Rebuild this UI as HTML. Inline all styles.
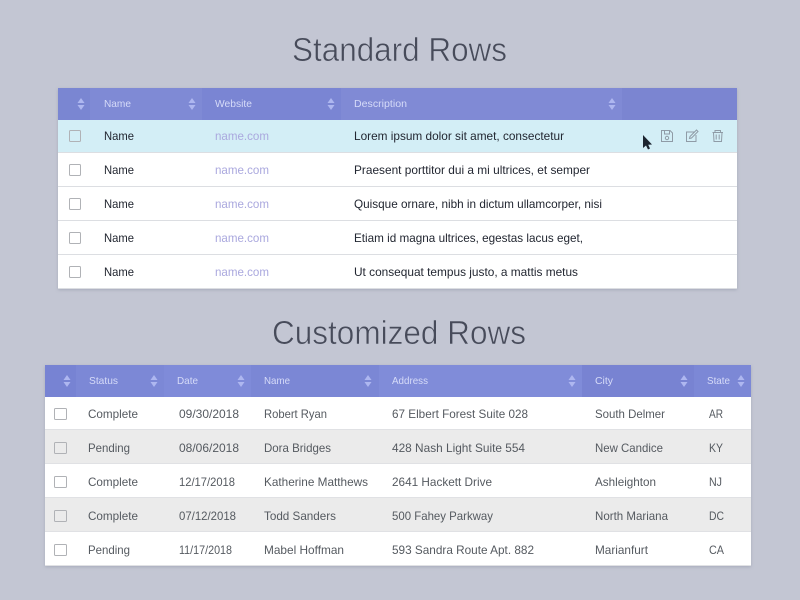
<!DOCTYPE html>
<html><head><meta charset="utf-8"><style>
html,body{margin:0;padding:0;background:#c3c6d3;width:800px;height:600px;overflow:hidden}
svg{display:block}
text{font-family:"Liberation Sans",sans-serif;font-size:12px}
.h{fill:#d6dbf8;font-size:10.5px}
.t{fill:#222730}
.l{fill:#aaa8de}
.g{fill:#555a60}
.title{font-size:33.5px;fill:#474b5a;stroke:#c3c6d3;stroke-width:.6px}
</style></head><body>
<svg width="800" height="600" viewBox="0 0 800 600" xmlns="http://www.w3.org/2000/svg">
<defs>
<filter id="s" x="-5%" y="-5%" width="110%" height="115%"><feDropShadow dx="0" dy="1" stdDeviation="1.5" flood-color="#70748a" flood-opacity=".35"/></filter>
<filter id="b"><feGaussianBlur stdDeviation="0.3"/></filter>
<g id="sort"><path d="M-.5 5L3 0L6.5 5Z" fill="#aeb7f0"/><path d="M-.5 7L3 12L6.5 7Z" fill="#aeb7f0"/></g>
</defs>
<rect width="800" height="600" fill="#c3c6d3"/>
<g filter="url(#b)">
<text class="title" x="292" y="61" textLength="215" lengthAdjust="spacingAndGlyphs">Standard Rows</text>
<text class="title" x="272" y="344" textLength="254" lengthAdjust="spacingAndGlyphs">Customized Rows</text>
</g>
<!-- Table 1 -->
<rect x="58" y="88" width="679" height="201" fill="#fff" filter="url(#s)"/>
<rect x="58" y="88" width="679" height="32" fill="#7a86d2"/>
<rect x="90" y="88" width="112" height="32" fill="#7f8ad5"/>
<rect x="202" y="88" width="139" height="32" fill="#7a85d3"/>
<rect x="341" y="88" width="281" height="32" fill="#808ad5"/>
<rect x="622" y="88" width="115" height="32" fill="#7b85d1"/>
<rect x="58" y="120" width="679" height="32" fill="#d3eef6"/>
<g fill="#dcdee2"><rect x="58" y="152" width="679" height="1"/><rect x="58" y="186" width="679" height="1"/><rect x="58" y="220" width="679" height="1"/><rect x="58" y="254" width="679" height="1"/><rect x="58" y="288" width="679" height="1"/></g>
<use href="#sort" x="78" y="98"/><use href="#sort" x="189" y="98"/><use href="#sort" x="328" y="98"/><use href="#sort" x="609" y="98"/>
<g fill="#fff" stroke="#b0b2b6" stroke-width="1"><rect x="69.5" y="130.5" width="11" height="11" rx="1" fill="#d3eef6"/><rect x="69.5" y="164.5" width="11" height="11" rx="1"/><rect x="69.5" y="198.5" width="11" height="11" rx="1"/><rect x="69.5" y="232.5" width="11" height="11" rx="1"/><rect x="69.5" y="266.5" width="11" height="11" rx="1"/></g>
<g filter="url(#b)">
<text class="h" x="104" y="107" textLength="27" lengthAdjust="spacingAndGlyphs">Name</text><text class="h" x="215" y="107" textLength="37" lengthAdjust="spacingAndGlyphs">Website</text><text class="h" x="354" y="107" textLength="53" lengthAdjust="spacingAndGlyphs">Description</text>
<text class="t" x="104" y="140" textLength="30" lengthAdjust="spacingAndGlyphs">Name</text><text class="l" x="215" y="140" textLength="54" lengthAdjust="spacingAndGlyphs">name.com</text><text class="t" x="354" y="140" textLength="210" lengthAdjust="spacingAndGlyphs">Lorem ipsum dolor sit amet, consectetur</text>
<text class="t" x="104" y="174" textLength="30" lengthAdjust="spacingAndGlyphs">Name</text><text class="l" x="215" y="174" textLength="54" lengthAdjust="spacingAndGlyphs">name.com</text><text class="t" x="354" y="174" textLength="236" lengthAdjust="spacingAndGlyphs">Praesent porttitor dui a mi ultrices, et semper</text>
<text class="t" x="104" y="208" textLength="30" lengthAdjust="spacingAndGlyphs">Name</text><text class="l" x="215" y="208" textLength="54" lengthAdjust="spacingAndGlyphs">name.com</text><text class="t" x="354" y="208" textLength="248" lengthAdjust="spacingAndGlyphs">Quisque ornare, nibh in dictum ullamcorper, nisi</text>
<text class="t" x="104" y="242" textLength="30" lengthAdjust="spacingAndGlyphs">Name</text><text class="l" x="215" y="242" textLength="54" lengthAdjust="spacingAndGlyphs">name.com</text><text class="t" x="354" y="242" textLength="229" lengthAdjust="spacingAndGlyphs">Etiam id magna ultrices, egestas lacus eget,</text>
<text class="t" x="104" y="276" textLength="30" lengthAdjust="spacingAndGlyphs">Name</text><text class="l" x="215" y="276" textLength="54" lengthAdjust="spacingAndGlyphs">name.com</text><text class="t" x="354" y="276" textLength="224" lengthAdjust="spacingAndGlyphs">Ut consequat tempus justo, a mattis metus</text>
</g>
<!-- action icons -->
<g fill="none" stroke="#8f9ba6" stroke-width="1" filter="url(#b)">
<path d="M661.5 130.5H670L672.5 133V141.5H661.5Z"/><path d="M664.5 130.5V134H669.5V130.5"/><circle cx="667" cy="138" r="1.7"/>
<path d="M695 132H686.5V141.5H696V135"/><path d="M690 136.5L696.5 130L698 131.5L691.5 138L689.5 138.5Z"/>
<path d="M712.5 132.5H723M715 132.5V130.5H720.5V132.5M713.5 132.5L714 141.5H721.5L722 132.5M716.2 134.5V139.5M719.2 134.5V139.5"/>
</g>
<path d="M643 135L643 148L646 145.5L648 149.5L650 148.5L648.2 144.8L652 144.5Z" fill="#1d2530"/>
<!-- Table 2 -->
<rect x="45" y="365" width="706" height="201" fill="#fff" filter="url(#s)"/>
<rect x="45" y="365" width="706" height="32" fill="#7783d3"/>
<rect x="76" y="365" width="88" height="32" fill="#7c88d6"/>
<rect x="164" y="365" width="87" height="32" fill="#7f8bd9"/>
<rect x="251" y="365" width="128" height="32" fill="#7b87d5"/>
<rect x="379" y="365" width="203" height="32" fill="#808cd9"/>
<rect x="582" y="365" width="112" height="32" fill="#7883d2"/>
<rect x="694" y="365" width="57" height="32" fill="#7c88d6"/>
<rect x="45" y="430" width="706" height="33" fill="#ebebeb"/><rect x="45" y="498" width="706" height="33" fill="#ebebeb"/>
<g fill="#e0e1e4"><rect x="45" y="429" width="706" height="1"/><rect x="45" y="463" width="706" height="1"/><rect x="45" y="497" width="706" height="1"/><rect x="45" y="531" width="706" height="1"/><rect x="45" y="565" width="706" height="1"/></g>
<use href="#sort" x="64" y="375"/><use href="#sort" x="151" y="375"/><use href="#sort" x="238" y="375"/><use href="#sort" x="365" y="375"/><use href="#sort" x="569" y="375"/><use href="#sort" x="681" y="375"/><use href="#sort" x="738" y="375"/>
<g stroke="#b0b2b6" stroke-width="1"><rect x="54.5" y="408.5" width="12" height="11" rx="1" fill="#fff"/><rect x="54.5" y="442.5" width="12" height="11" rx="1" fill="#ebebeb"/><rect x="54.5" y="476.5" width="12" height="11" rx="1" fill="#fff"/><rect x="54.5" y="510.5" width="12" height="11" rx="1" fill="#ebebeb"/><rect x="54.5" y="544.5" width="12" height="11" rx="1" fill="#fff"/></g>
<g filter="url(#b)">
<text class="h" x="89" y="384" textLength="29" lengthAdjust="spacingAndGlyphs">Status</text><text class="h" x="177" y="384" textLength="21" lengthAdjust="spacingAndGlyphs">Date</text><text class="h" x="264" y="384" textLength="26" lengthAdjust="spacingAndGlyphs">Name</text><text class="h" x="392" y="384" textLength="36" lengthAdjust="spacingAndGlyphs">Address</text><text class="h" x="595" y="384" textLength="18" lengthAdjust="spacingAndGlyphs">City</text><text class="h" x="707" y="384" textLength="23" lengthAdjust="spacingAndGlyphs">State</text>
<text class="g" x="88" y="418" textLength="50" lengthAdjust="spacingAndGlyphs">Complete</text><text class="g" x="179" y="418" textLength="60" lengthAdjust="spacingAndGlyphs">09/30/2018</text><text class="g" x="264" y="418" textLength="63" lengthAdjust="spacingAndGlyphs">Robert Ryan</text><text class="g" x="392" y="418" textLength="136" lengthAdjust="spacingAndGlyphs">67 Elbert Forest Suite 028</text><text class="g" x="595" y="418" textLength="70" lengthAdjust="spacingAndGlyphs">South Delmer</text><text class="g" x="709" y="418" textLength="14" lengthAdjust="spacingAndGlyphs">AR</text>
<text class="g" x="88" y="452" textLength="42" lengthAdjust="spacingAndGlyphs">Pending</text><text class="g" x="179" y="452" textLength="60" lengthAdjust="spacingAndGlyphs">08/06/2018</text><text class="g" x="264" y="452" textLength="67" lengthAdjust="spacingAndGlyphs">Dora Bridges</text><text class="g" x="392" y="452" textLength="133" lengthAdjust="spacingAndGlyphs">428 Nash Light Suite 554</text><text class="g" x="595" y="452" textLength="68" lengthAdjust="spacingAndGlyphs">New Candice</text><text class="g" x="709" y="452" textLength="14" lengthAdjust="spacingAndGlyphs">KY</text>
<text class="g" x="88" y="486" textLength="50" lengthAdjust="spacingAndGlyphs">Complete</text><text class="g" x="179" y="486" textLength="56" lengthAdjust="spacingAndGlyphs">12/17/2018</text><text class="g" x="264" y="486" textLength="104" lengthAdjust="spacingAndGlyphs">Katherine Matthews</text><text class="g" x="392" y="486" textLength="100" lengthAdjust="spacingAndGlyphs">2641 Hackett Drive</text><text class="g" x="595" y="486" textLength="61" lengthAdjust="spacingAndGlyphs">Ashleighton</text><text class="g" x="709" y="486" textLength="13" lengthAdjust="spacingAndGlyphs">NJ</text>
<text class="g" x="88" y="520" textLength="50" lengthAdjust="spacingAndGlyphs">Complete</text><text class="g" x="179" y="520" textLength="57" lengthAdjust="spacingAndGlyphs">07/12/2018</text><text class="g" x="264" y="520" textLength="72" lengthAdjust="spacingAndGlyphs">Todd Sanders</text><text class="g" x="392" y="520" textLength="101" lengthAdjust="spacingAndGlyphs">500 Fahey Parkway</text><text class="g" x="595" y="520" textLength="73" lengthAdjust="spacingAndGlyphs">North Mariana</text><text class="g" x="709" y="520" textLength="15" lengthAdjust="spacingAndGlyphs">DC</text>
<text class="g" x="88" y="554" textLength="42" lengthAdjust="spacingAndGlyphs">Pending</text><text class="g" x="179" y="554" textLength="53" lengthAdjust="spacingAndGlyphs">11/17/2018</text><text class="g" x="264" y="554" textLength="80" lengthAdjust="spacingAndGlyphs">Mabel Hoffman</text><text class="g" x="392" y="554" textLength="142" lengthAdjust="spacingAndGlyphs">593 Sandra Route Apt. 882</text><text class="g" x="595" y="554" textLength="53" lengthAdjust="spacingAndGlyphs">Marianfurt</text><text class="g" x="709" y="554" textLength="15" lengthAdjust="spacingAndGlyphs">CA</text>
</g>
</svg>
</body></html>
